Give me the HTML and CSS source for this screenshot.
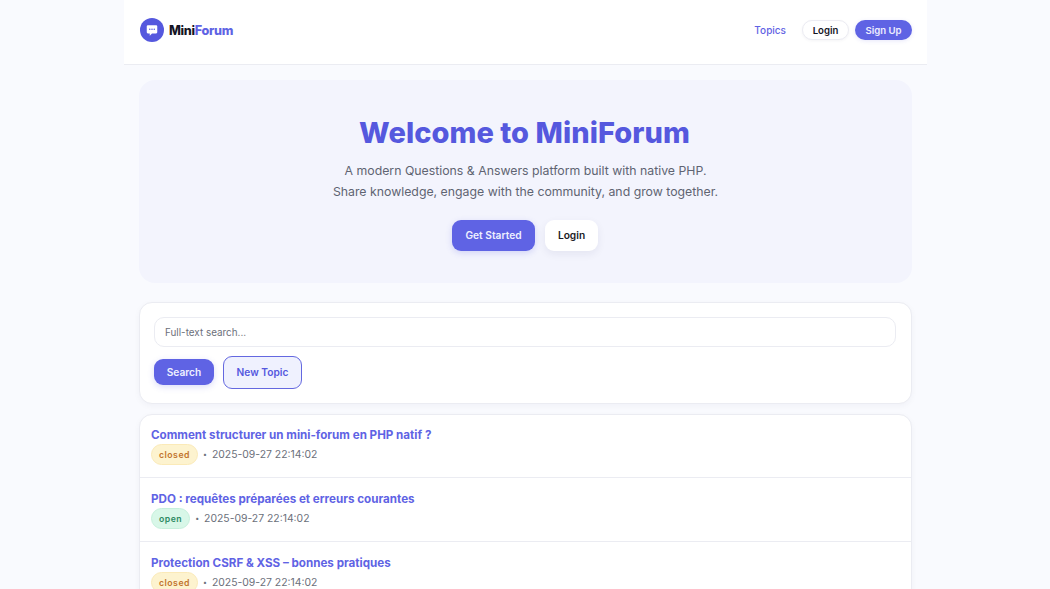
FILE: index.html
```html
<!DOCTYPE html>
<html lang="en">
<head>
<meta charset="utf-8">
<title>MiniForum</title>
<link rel="stylesheet" href="styles.css">
</head>
<body>
<div class="page">
  <header class="topbar">
    <a class="brand">
      <span class="logo">
        <svg width="12" height="12" viewBox="0 0 16 16"><path fill="#fff" d="M2.500 1.500h11a1.500 1.500 0 0 1 1.500 1.500v8a1.500 1.500 0 0 1-1.500 1.500H8l-3 3v-3H2.500A1.500 1.500 0 0 1 1 11V3a1.500 1.500 0 0 1 1.500-1.500z"/><circle cx="5" cy="7" r="1" fill="#5558de"/><circle cx="8" cy="7" r="1" fill="#5558de"/><circle cx="11" cy="7" r="1" fill="#5558de"/></svg>
      </span>
      <span class="brand-name">Mini<span class="brand-accent">Forum</span></span>
    </a>
    <nav class="nav">
      <a class="nav-link">Topics</a>
      <a class="pill pill-light">Login</a>
      <a class="pill pill-primary">Sign Up</a>
    </nav>
  </header>
  <main class="content">
    <section class="hero">
      <h1>Welcome to MiniForum</h1>
      <p>A modern Questions &amp; Answers platform built with native PHP.<br>Share knowledge, engage with the community, and grow together.</p>
      <div class="hero-actions">
        <a class="btn btn-primary btn-lg">Get Started</a>
        <a class="btn btn-white btn-lg">Login</a>
      </div>
    </section>
    <section class="card search">
      <input class="search-input" type="text" placeholder="Full-text search...">
      <div class="search-actions">
        <button class="btn btn-primary btn-sm">Search</button>
        <a class="btn btn-outline">New Topic</a>
      </div>
    </section>
    <section class="card list">
      <article class="topic">
        <a class="topic-title">Comment structurer un mini-forum en PHP natif ?</a>
        <div class="meta"><span class="badge closed">closed</span><span class="dot">•</span><span>2025-09-27 22:14:02</span></div>
      </article>
      <article class="topic">
        <a class="topic-title">PDO : requêtes préparées et erreurs courantes</a>
        <div class="meta"><span class="badge open">open</span><span class="dot">•</span><span>2025-09-27 22:14:02</span></div>
      </article>
      <article class="topic">
        <a class="topic-title">Protection CSRF &amp; XSS – bonnes pratiques</a>
        <div class="meta"><span class="badge closed">closed</span><span class="dot">•</span><span>2025-09-27 22:14:02</span></div>
      </article>
    </section>
  </main>
</div>
</body>
</html>
```
FILE: styles.css
```css
* { box-sizing: border-box; }
html, body { height: 100%; }
body {
  margin: 0;
  height: 589px;
  overflow: hidden;
  background: #f9fafe;
  font-family: Inter, "Liberation Sans", sans-serif;
  color: #1a1a24;
}
.page {
  width: 803px;
  margin-left: 124px;
}
.topbar {
  height: 65px;
  background: #fff;
  border-bottom: 1px solid #ebecf2;
  padding: 0 15px 4px 16px;
  display: flex;
  align-items: center;
  justify-content: space-between;
}
.brand { display: flex; align-items: center; gap: 5px; }
.logo {
  width: 24px;
  height: 24px;
  border-radius: 50%;
  background: #5558de;
  display: flex;
  align-items: center;
  justify-content: center;
}
.brand-name { font-size: 12.600px; font-weight: 800; letter-spacing: -0.3px; color: #14141f; }
.brand-accent { color: #5f63e4; }
.nav { display: flex; align-items: center; gap: 6px; }
.nav-link {
  font-size: 10px;
  font-weight: 500;
  color: #5f63e4;
  margin-right: 10px;
}
.pill {
  height: 20px;
  border-radius: 10px;
  font-size: 9.600px;
  font-weight: 600;
  display: flex;
  align-items: center;
  justify-content: center;
}
.pill-light {
  width: 47px;
  background: #fff;
  color: #14141f;
  border: 1px solid #ececf3;
  box-shadow: 0 1px 3px rgba(30, 30, 80, .05);
}
.pill-primary { width: 57px; background: #5f63e4; color: #eef; box-shadow: 0 1px 4px rgba(91, 95, 224, .15); }
.content {
  padding: 15px 15px 0 15px;
  display: flex;
  flex-direction: column;
}
.hero {
  height: 203px;
  border-radius: 16px;
  background: #f3f4fd;
  padding-top: 35px;
  text-align: center;
}
.hero h1 {
  margin: 0;
  padding-right: 2px;
  font-size: 29px;
  line-height: 36px;
  font-weight: 800;
  letter-spacing: 0.05px;
  color: #5558de;
}
.hero p {
  margin: 9px 0 0;
  font-size: 12.300px;
  line-height: 21px;
  color: #5f6472;
}
.hero-actions {
  margin-top: 18px;
  display: flex;
  justify-content: center;
  gap: 10px;
  padding-right: 1px;
}
.btn {
  display: flex;
  align-items: center;
  justify-content: center;
  padding: 0 0 1px;
  font-family: inherit;
  font-size: 10.200px;
  font-weight: 600;
  border-radius: 9px;
  border: 0;
}
.btn-lg { height: 31px; }
.btn-primary { background: #5f63e4; color: #eef0ff; box-shadow: 0 2px 6px rgba(91, 95, 224, .22); }
.btn-white { background: #fff; color: #1a1a24; box-shadow: 0 3px 8px rgba(30, 30, 80, .07); }
.hero-actions .btn-primary { width: 83px; }
.hero-actions .btn-white { width: 53px; }
.btn-sm { width: 60px; height: 26px; margin-bottom: 1px; }
.btn-outline {
  width: 79px;
  height: 33px;
  background: #eff1fe;
  border: 1px solid #6468e0;
  color: #5558de;
}
.card {
  background: #fff;
  border: 1px solid #ebecf2;
  border-radius: 13px;
  box-shadow: 0 2px 6px rgba(30, 30, 80, .04);
}
.search {
  height: 102px;
  margin-top: 19px;
  padding: 14px 15px 14px 14px;
  display: flex;
  flex-direction: column;
  gap: 9px;
}
.search-input {
  width: 100%;
  height: 30px;
  flex: none;
  padding: 0 10px;
  border: 1px solid #ebecf2;
  border-radius: 10px;
  background: #fff;
  font-family: inherit;
  font-size: 9.900px;
  outline: none;
}
.search-input::placeholder { color: #6b6f7a; opacity: 1; }
.search-actions { display: flex; align-items: center; gap: 9px; }
.list { margin-top: 10px; }
.topic {
  height: 64.300px;
  padding: 13px 11px 0;
  border-bottom: 1px solid #ebecf2;
}
.topic:first-child { height: 63px; padding-top: 12px; }
.topic:last-child { border-bottom: 0; }
.topic-title {
  display: block;
  font-size: 11.630px;
  line-height: 16px;
  font-weight: 700;
  color: #5f63e4;
}
.meta {
  margin-top: 1px;
  display: flex;
  align-items: center;
  gap: 5px;
  font-size: 10.400px;
  color: #6b6f7a;
}
.dot { font-size: 7px; }
.badge {
  height: 21px;
  padding: 0 7px;
  border-radius: 11px;
  font-size: 8.700px;
  font-weight: 600;
  letter-spacing: .5px;
  display: flex;
  align-items: center;
}
.closed { background: #fdf3cf; border: 1px solid #fbeab8; color: #c2752d; }
.open { background: #d8f7e8; border: 1px solid #c6f0dc; color: #2e8a63; }
```
